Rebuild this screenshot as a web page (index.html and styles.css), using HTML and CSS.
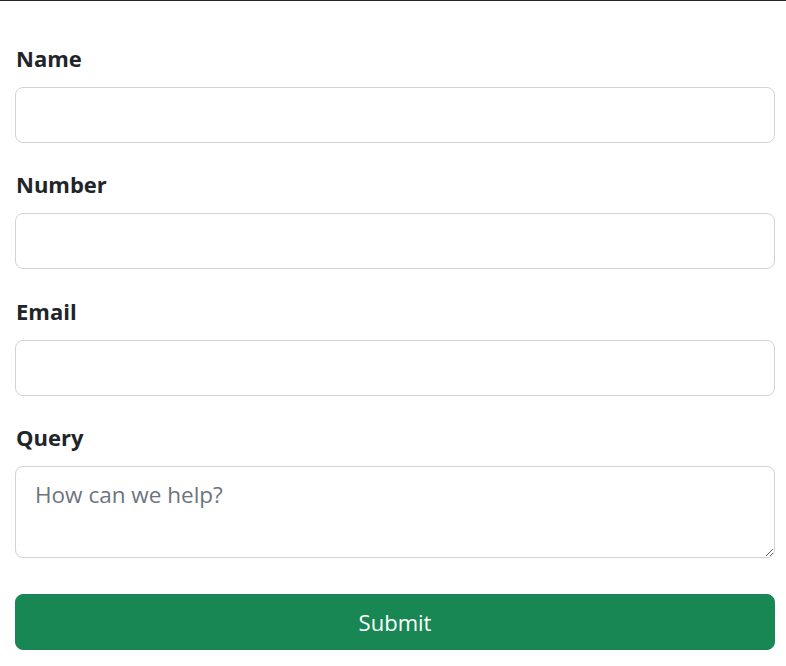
FILE: index.html
```html
<!DOCTYPE html>
<html>
<head>
<meta charset="utf-8">
<link rel="stylesheet" href="styles.css">
</head>
<body>
<form class="form">
  <div class="group">
    <label class="label">Name</label>
    <input class="control" type="text">
  </div>
  <div class="group">
    <label class="label">Number</label>
    <input class="control" type="text">
  </div>
  <div class="group">
    <label class="label">Email</label>
    <input class="control" type="text">
  </div>
  <div class="group">
    <label class="label">Query</label>
    <textarea class="control area" placeholder="How can we help?"></textarea>
  </div>
  <button class="submit" type="button">Submit</button>
</form>
</body>
</html>
```
FILE: styles.css
```css
* { box-sizing: border-box; }
html, body { margin: 0; padding: 0; background: #fff; }
body {
  border-top: 1px solid #212529;
  font-family: "Open Sans", sans-serif;
  color: #212529;
}
.form {
  display: flex;
  flex-direction: column;
  padding: 42px 11px 0 15px;
}
.group {
  display: flex;
  flex-direction: column;
  margin-bottom: 26.33px;
}
.label {
  font-weight: 700;
  font-size: 22px;
  line-height: 30px;
  margin-bottom: 14px;
  padding-left: 1px;
}
.control {
  display: block;
  width: 100%;
  height: 56px;
  border: 1px solid #ced4da;
  border-radius: 8px;
  padding: 12px 19px;
  font-family: "Open Sans", sans-serif;
  font-size: 22.5px;
  line-height: 30px;
  color: #212529;
  background: #fff;
  outline: none;
}
.area {
  height: 92px;
  resize: vertical;
  padding-top: 13px;
}
.area::placeholder { color: #6c757d; }
.submit {
  height: 56px;
  width: 100%;
  border: 1px solid #198754;
  background: #198754;
  color: #fff;
  border-radius: 8px;
  font-family: "Open Sans", sans-serif;
  font-size: 22px;
  line-height: 30px;
  margin-top: 10px;
}
```
